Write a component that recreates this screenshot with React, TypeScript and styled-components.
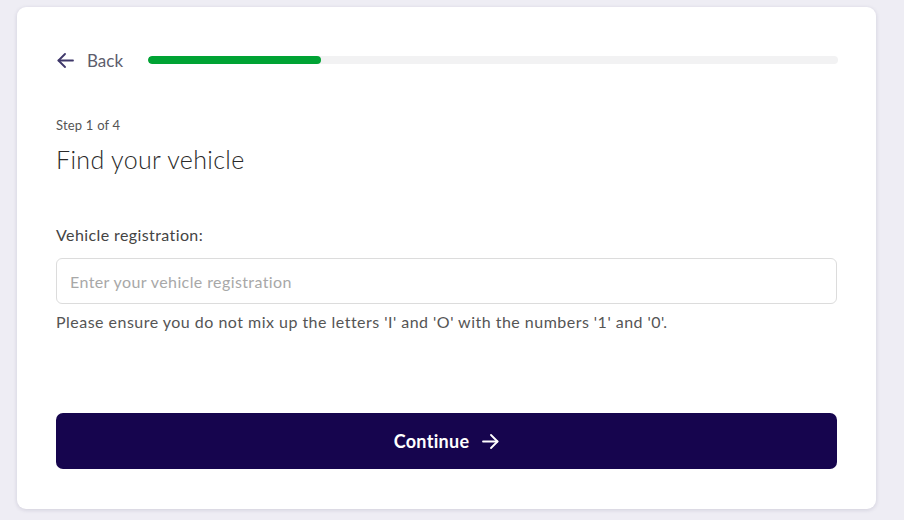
import React from "react";
import styled, { createGlobalStyle } from "styled-components";

const Global = createGlobalStyle`
  html, body { margin: 0; padding: 0; background: #eeedf4; }
  body { font-family: Lato, "Open Sans", sans-serif; color: #333; }
  * { box-sizing: border-box; }
`;

const Page = styled.div`
  width: 904px;
  height: 520px;
  padding: 7px 28px 0 17px;
`;

const Card = styled.div`
  width: 859px;
  height: 502px;
  background: #fff;
  border-radius: 9px;
  box-shadow: 0 1px 4px rgba(30, 20, 70, 0.14);
  padding: 41px 39px 40px;
  display: flex;
  flex-direction: column;
`;

const TopRow = styled.div`
  display: flex;
  align-items: center;
  height: 24px;
`;

const BackLink = styled.button`
  display: flex;
  align-items: center;
  gap: 13px;
  background: none;
  border: 0;
  padding: 0 0 0 1px;
  margin: 0;
  font-family: inherit;
  font-size: 17px;
  color: #5d5d6d;
  cursor: pointer;
  svg { color: #3f386a; }
`;

const Track = styled.div`
  flex: 1;
  height: 8px;
  margin-left: 25px;
  margin-right: -1px;
  background: #f2f2f3;
  border-radius: 4px;
  overflow: hidden;
`;

const Fill = styled.div`
  height: 100%;
  background: #00a334;
  border-radius: 4px;
`;

const StepText = styled.div`
  margin-top: 45px;
  font-size: 13px;
  line-height: 16px;
  letter-spacing: 0.2px;
  color: #555;
`;

const Heading = styled.h1`
  margin: 10px 0 0;
  font-size: 25px;
  line-height: 32px;
  font-weight: 300;
  letter-spacing: 0.35px;
  color: #2a2a2a;
`;

const Label = styled.label`
  margin-top: 49px;
  font-size: 16px;
  line-height: 22px;
  letter-spacing: 0.4px;
  color: #444;
`;

const Input = styled.input`
  margin-top: 12px;
  height: 46px;
  width: 100%;
  border: 1px solid #dcdcdc;
  border-radius: 6px;
  padding: 0 13px;
  font-family: inherit;
  font-size: 16px;
  letter-spacing: 0.4px;
  color: #333;
  outline: none;
  &::placeholder { color: #a8a8a8; }
`;

const Helper = styled.div`
  margin-top: 8px;
  font-size: 16px;
  line-height: 20px;
  letter-spacing: 0.48px;
  color: #555;
`;

const ContinueButton = styled.button`
  margin-top: 81px;
  height: 56px;
  width: 100%;
  border: 0;
  border-radius: 7px;
  background: #16054e;
  color: #fff;
  font-family: inherit;
  font-size: 18px;
  font-weight: 700;
  letter-spacing: 0.3px;
  display: flex;
  align-items: center;
  justify-content: center;
  gap: 13px;
  cursor: pointer;
`;

const Arrow = ({ dir }: { dir: "left" | "right" }) => (
  <svg
    width="17"
    height="15"
    viewBox="0 0 17 15"
    fill="none"
    stroke="currentColor"
    strokeWidth="1.8"
    strokeLinecap="round"
    strokeLinejoin="round"
    style={dir === "right" ? { transform: "scaleX(-1)" } : undefined}
  >
    <path d="M16 7.5H1.5" />
    <path d="M8 1L1.5 7.5L8 14" />
  </svg>
);

export default function App() {
  const progress = 25;
  return (
    <>
      <Global />
      <Page>
        <Card>
          <TopRow>
            <BackLink>
              <Arrow dir="left" />
              Back
            </BackLink>
            <Track>
              <Fill style={{ width: `${progress}%` }} />
            </Track>
          </TopRow>
          <StepText>Step 1 of 4</StepText>
          <Heading>Find your vehicle</Heading>
          <Label htmlFor="reg">Vehicle registration:</Label>
          <Input id="reg" placeholder="Enter your vehicle registration" />
          <Helper>
            Please ensure you do not mix up the letters 'I' and 'O' with the numbers '1' and '0'.
          </Helper>
          <ContinueButton>
            Continue
            <Arrow dir="right" />
          </ContinueButton>
        </Card>
      </Page>
    </>
  );
}
